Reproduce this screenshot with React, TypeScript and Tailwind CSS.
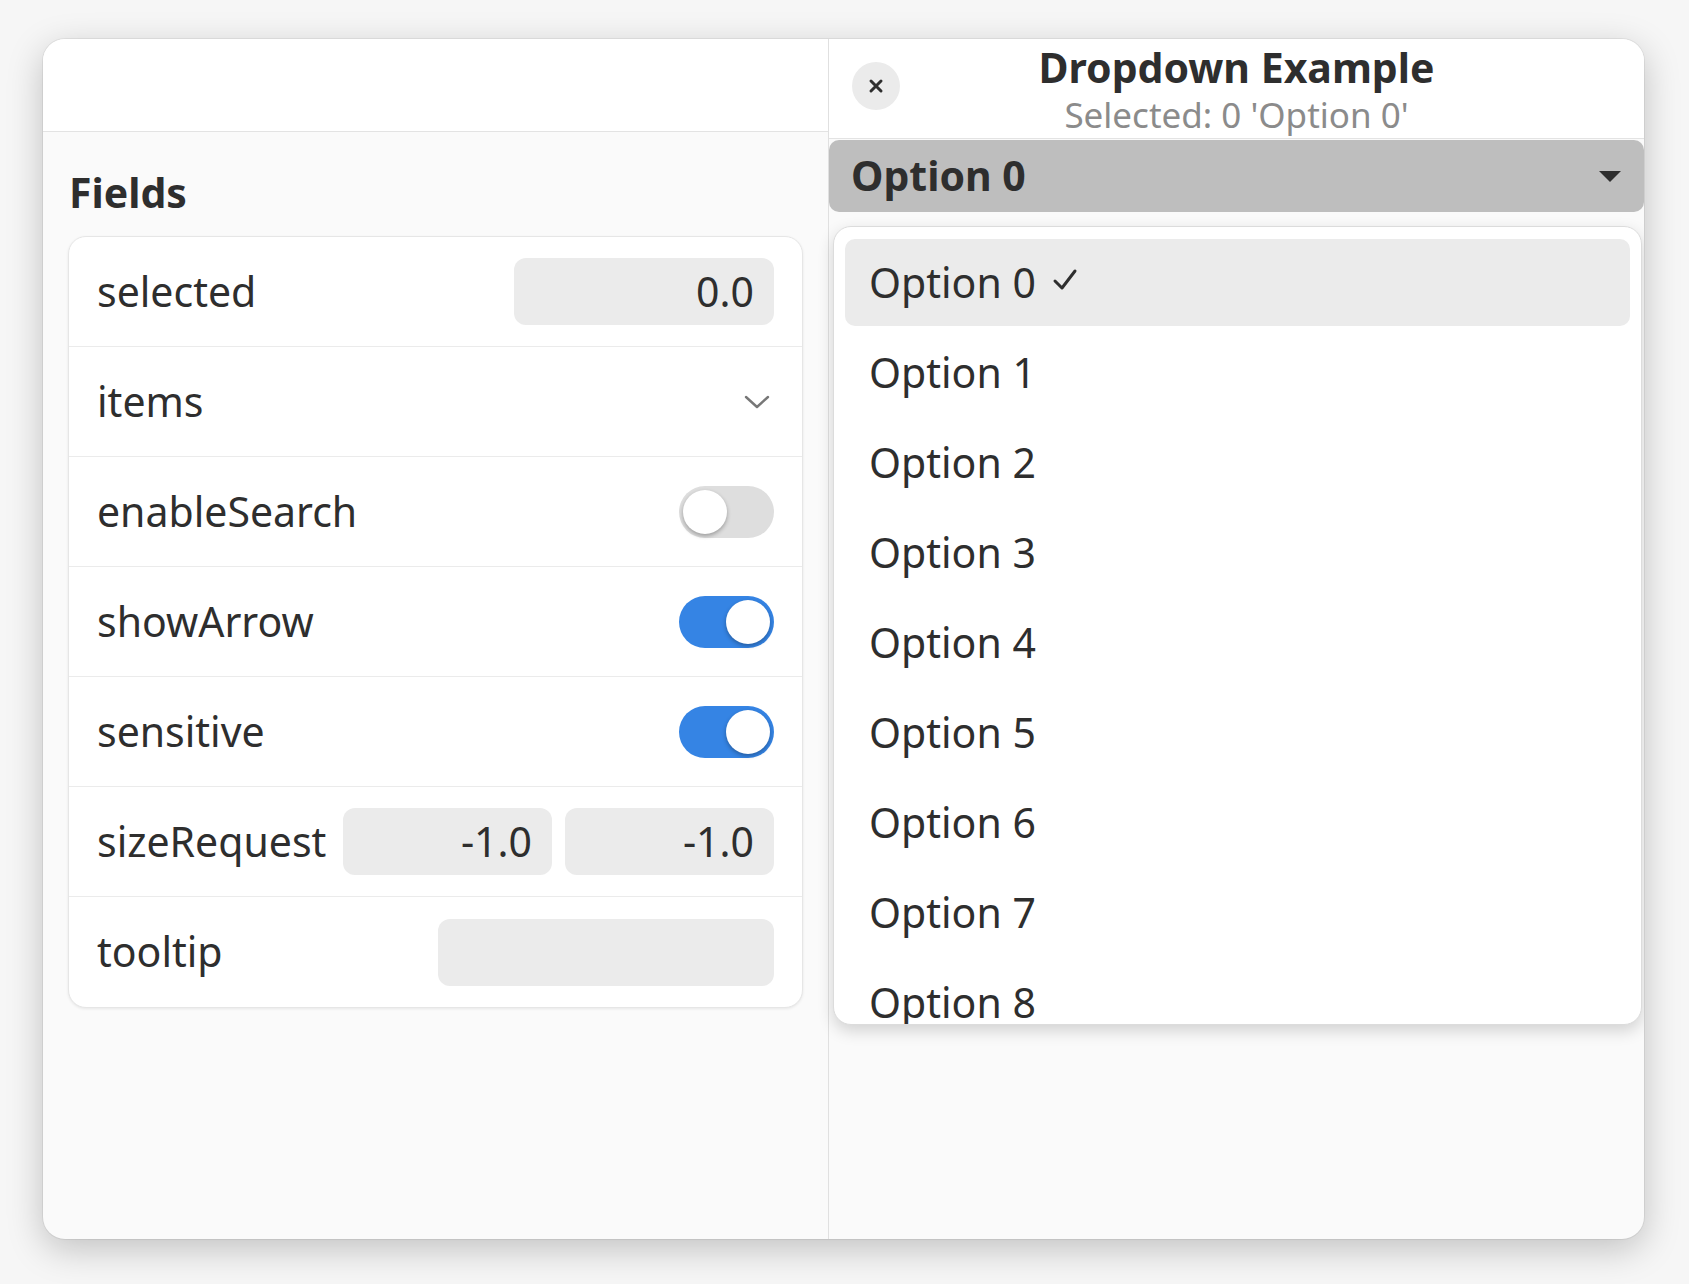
import React from 'react';

const font = { fontFamily: '"Noto Sans", "Open Sans", sans-serif' };

function Toggle({ on }: { on: boolean }) {
  return (
    <div
      className={`w-[95px] h-[52px] rounded-full flex items-center px-[4px] ${
        on ? 'bg-[#3584e4] justify-end' : 'bg-[#dedede] justify-start'
      }`}
    >
      <div className="w-[44px] h-[44px] rounded-full bg-white shadow-[0_2px_4px_rgba(0,0,0,0.3)]" />
    </div>
  );
}

function NumberBox({ value, width }: { value: string; width: string }) {
  return (
    <div className={`${width} h-[67px] rounded-[12px] bg-[#ebebeb] flex items-center justify-end pr-[20px]`}>
      {value}
    </div>
  );
}

function Row({ label, children, last }: { label: string; children?: React.ReactNode; last?: boolean }) {
  return (
    <div className={`h-[110px] flex items-center justify-between px-[28px] ${last ? '' : 'border-b border-[#ebebeb]'}`}>
      <span>{label}</span>
      {children}
    </div>
  );
}

export default function App() {
  const options = Array.from({ length: 9 }, (_, i) => `Option ${i}`);

  return (
    <div className="w-[1689px] h-[1284px] bg-[#f6f6f6] pt-[39px] pl-[43px] text-[#2e2e2e]" style={font}>
      <div className="w-[1601px] h-[1200px] rounded-[22px] overflow-hidden flex bg-[#fafafa] shadow-[0_10px_36px_rgba(0,0,0,0.22),0_0_0_1px_rgba(0,0,0,0.06)]">
        {/* Left pane */}
        <div className="w-[786px] border-r border-[#e0e0e0] flex flex-col">
          <div className="h-[93px] bg-white border-b border-[#e3e3e3]" />
          <div className="px-[25px] pt-[36px]">
            <h2 className="text-[41px] leading-[48px] font-bold mb-[20px] pl-[1px]">Fields</h2>
            <div className="bg-white rounded-[18px] border border-[#e6e6e6] shadow-[0_1px_3px_rgba(0,0,0,0.08)] text-[41px] overflow-hidden">
              <Row label="selected">
                <NumberBox value="0.0" width="w-[260px]" />
              </Row>
              <Row label="items">
                <svg width="26" height="14" viewBox="0 0 26 14" className="mr-[4px]">
                  <polyline points="2,2 13,12 24,2" fill="none" stroke="#777777" strokeWidth="2.4" strokeLinecap="round" strokeLinejoin="round" />
                </svg>
              </Row>
              <Row label="enableSearch">
                <Toggle on={false} />
              </Row>
              <Row label="showArrow">
                <Toggle on />
              </Row>
              <Row label="sensitive">
                <Toggle on />
              </Row>
              <Row label="sizeRequest">
                <div className="flex gap-[13px]">
                  <NumberBox value="-1.0" width="w-[209px]" />
                  <NumberBox value="-1.0" width="w-[209px]" />
                </div>
              </Row>
              <Row label="tooltip" last>
                <div className="w-[336px] h-[67px] rounded-[12px] bg-[#ebebeb]" />
              </Row>
            </div>
          </div>
        </div>

        {/* Right pane */}
        <div className="flex-1 flex flex-col">
          <div className="h-[100px] bg-white border-b border-[#e3e3e3] grid grid-cols-[1fr_auto_1fr] items-start">
            <div className="pl-[23px] pt-[23px]">
              <div className="w-[48px] h-[48px] rounded-full bg-[#ebebeb] flex items-center justify-center">
                <svg width="16" height="16" viewBox="0 0 16 16">
                  <path d="M3 3 L13 13 M13 3 L3 13" stroke="#2e2e2e" strokeWidth="3" strokeLinecap="round" />
                </svg>
              </div>
            </div>
            <div className="flex flex-col items-center pt-[4px]">
              <div className="text-[41px] leading-[48px] font-bold">Dropdown Example</div>
              <div className="text-[35px] leading-[44px] mt-[2px] text-[#8b8b8b]">Selected: 0 'Option 0'</div>
            </div>
            <div />
          </div>

          <div className="mt-[1px] h-[72px] rounded-[10px] bg-[#bebebe] flex items-center justify-between pl-[22px] pr-[22px]">
            <span className="text-[41px] font-bold">Option 0</span>
            <svg width="24" height="13" viewBox="0 0 24 13">
              <polygon points="1,1 23,1 12,12" fill="#2e2e2e" />
            </svg>
          </div>

          <div className="mt-[14px] ml-[4px] mr-[2px] h-[799px] bg-white rounded-[18px] border border-[#dcdcdc] shadow-[0_6px_16px_rgba(0,0,0,0.16)] overflow-hidden px-[11px] pt-[12px]">
            <div className="flex flex-col gap-[3px] text-[41px]">
              {options.map((o, i) => (
                <div
                  key={o}
                  className={`h-[87px] shrink-0 flex items-center pl-[24px] rounded-[10px] ${i === 0 ? 'bg-[#ebebeb]' : ''}`}
                >
                  <span>{o}</span>
                  {i === 0 && (
                    <svg width="26" height="24" viewBox="0 0 26 24" className="ml-[16px] -mt-[6px]">
                      <polyline points="3,13 10,20 23,3" fill="none" stroke="#2e2e2e" strokeWidth="3" strokeLinecap="round" strokeLinejoin="round" />
                    </svg>
                  )}
                </div>
              ))}
            </div>
          </div>
        </div>
      </div>
    </div>
  );
}
